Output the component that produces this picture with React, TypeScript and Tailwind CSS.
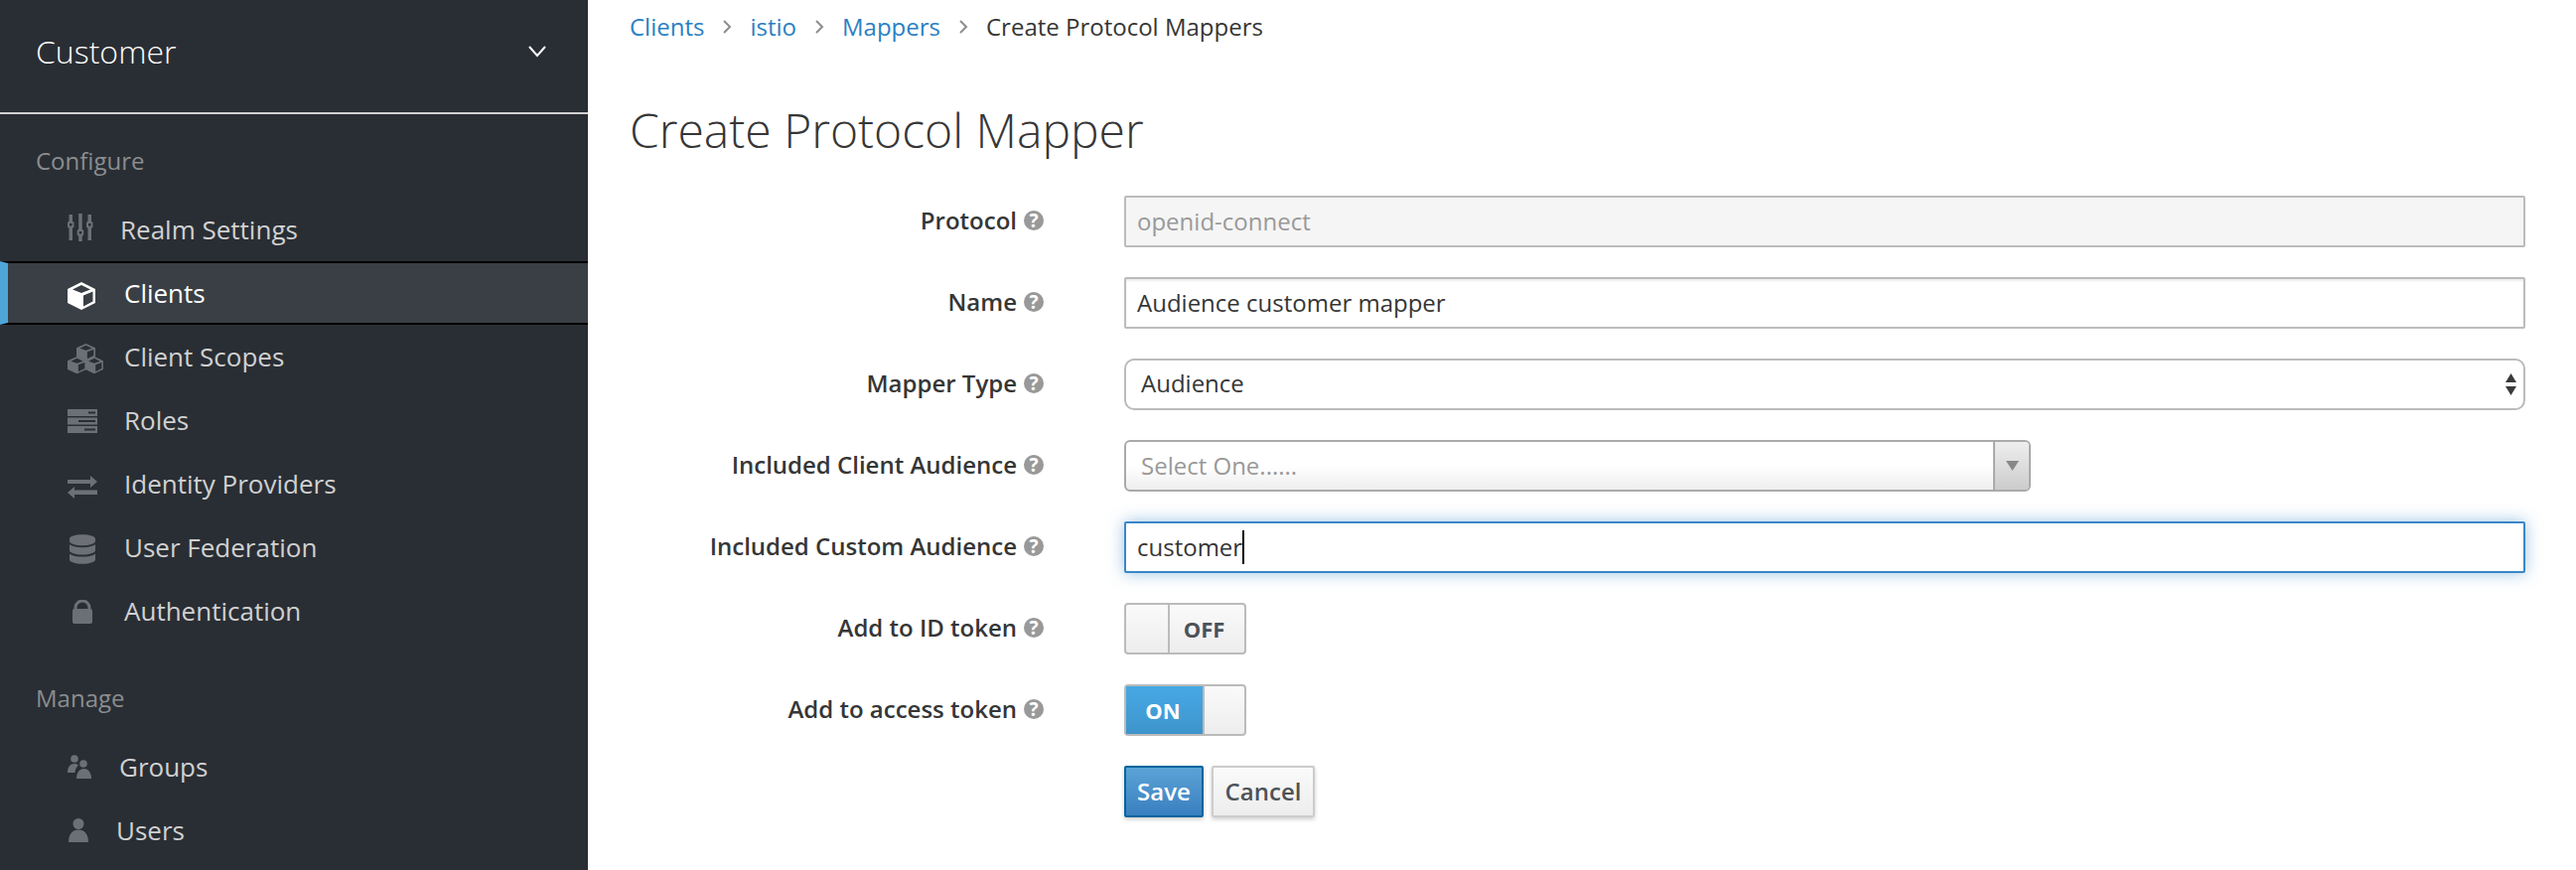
import { FaDatabase } from "react-icons/fa";
import type { ReactNode } from "react";

const CUBE = "M14 0l14 7v14l-14 7-14-7V7zM14 3L5 7.500l9 3.500 9-3.500zM16 13.500v11l9.500-5V9.500z";

const SlidersIcon = () => (
  <svg width="26" height="28" viewBox="0 0 26 28" fill="#6c7076" className="mt-[-4px]">
    <rect x="1.500" y="1" width="3.500" height="26" />
    <rect x="11.200" y="0" width="3.500" height="28" />
    <rect x="20.500" y="1" width="3.500" height="26" />
    <rect x="0" y="8" width="6.500" height="6.500" rx="1.500" stroke="#292e34" strokeWidth="0" />
    <rect x="9.700" y="16" width="6.500" height="6.500" rx="1.500" />
    <rect x="19" y="8" width="6.500" height="6.500" rx="1.500" />
    <rect x="2" y="10" width="2.500" height="2.500" fill="#292e34" />
    <rect x="11.700" y="18" width="2.500" height="2.500" fill="#292e34" />
    <rect x="21" y="10" width="2.500" height="2.500" fill="#292e34" />
  </svg>
);

const CubeIcon = () => (
  <svg width="28" height="28" viewBox="0 0 28 28" fill="#fff" className="mt-[6px]">
    <path fillRule="evenodd" d={CUBE} />
  </svg>
);

const CubesIcon = () => (
  <svg width="36" height="31" viewBox="0 0 36 31" fill="#6c7076" className="mt-[5px]">
    <path fillRule="evenodd" transform="translate(9 0) scale(0.68 0.62)" d={CUBE} />
    <path fillRule="evenodd" transform="translate(0 13) scale(0.68 0.62)" d={CUBE} />
    <path fillRule="evenodd" transform="translate(18 13) scale(0.64 0.62)" d={CUBE} />
  </svg>
);

const RolesIcon = () => (
  <svg width="30" height="24" viewBox="0 0 30 24" fill="#6c7076" className="mt-[2px]">
    <path fillRule="evenodd" d="M0 0h30v7H0zM21 2.500v2h7v-2z" />
    <path fillRule="evenodd" d="M0 8.500h30v7H0zM11 11v2h17v-2z" />
    <path fillRule="evenodd" d="M0 17h30v7H0zM17 19.500v2h11v-2z" />
  </svg>
);

const ExchangeIcon = () => (
  <svg width="30" height="23" viewBox="0 0 30 23" fill="#6c7076" className="mt-[6px]">
    <path d="M0 4h23V0l7 6-7 6V8H0z" />
    <path d="M30 14.500H7V11l-7 6 7 6v-4h23z" />
  </svg>
);

const LockIcon = () => (
  <svg width="20" height="24" viewBox="0 0 20 24" fill="#6c7076" className="ml-[5px] mt-[2px]">
    <path d="M3 10V8a7 7 0 0114 0v2" fill="none" stroke="#6c7076" strokeWidth="3" />
    <rect x="0" y="9" width="20" height="15" rx="2" />
  </svg>
);

const GroupsIcon = () => (
  <svg width="24" height="24" viewBox="0 0 24 24" fill="#6c7076">
    <circle cx="7" cy="4" r="3.800" />
    <path d="M0 18c0-6 3-9 7-9 1.500 0 3 .5 4 1.500-2 2-3.500 4-3.500 7.500z" />
    <circle cx="16" cy="9" r="3.800" />
    <path d="M9 24c0-6 3-10 7.500-10S24 18 24 24z" />
  </svg>
);

const UserIcon = () => (
  <svg width="20" height="24" viewBox="0 0 20 24" fill="#6c7076" className="ml-[1px]">
    <circle cx="10" cy="5.500" r="5.500" />
    <path d="M0 24c0-8 4-12.500 10-12.500S20 16 20 24z" />
  </svg>
);

const navConfigure: { label: string; icon: ReactNode; gap: string; active?: boolean }[] = [
  { label: "Realm Settings", icon: <SlidersIcon />, gap: "w-[53px]" },
  { label: "Clients", icon: <CubeIcon />, gap: "w-[57px]", active: true },
  { label: "Client Scopes", icon: <CubesIcon />, gap: "w-[57px]" },
  { label: "Roles", icon: <RolesIcon />, gap: "w-[57px]" },
  { label: "Identity Providers", icon: <ExchangeIcon />, gap: "w-[57px]" },
  { label: "User Federation", icon: <FaDatabase className="w-[26px] h-[30px] text-[#6c7076] ml-[2px] mt-[4px]" />, gap: "w-[57px]" },
  { label: "Authentication", icon: <LockIcon />, gap: "w-[57px]" },
];

const navManage = [
  { label: "Groups", icon: <GroupsIcon />, gap: "w-[52px]" },
  { label: "Users", icon: <UserIcon />, gap: "w-[49px]" },
];

const NavRow = ({ label, icon, gap, active }: { label: string; icon: ReactNode; gap: string; active?: boolean }) => (
  <div
    className={
      active
        ? "flex items-center h-[64px] pl-[60px] bg-[#393f44] border-y-2 border-black border-l-[8px] border-l-[#4ea5d8] text-white"
        : "flex items-center h-[64px] pl-[68px] text-[#d1d1d1]"
    }
  >
    <span className="w-0 flex items-center">
      <span className="shrink-0 flex">{icon}</span>
    </span>
    <span className={gap + " shrink-0"} />
    <span>{label}</span>
  </div>
);

const Help = () => (
  <span className="inline-flex items-center justify-center w-[20px] h-[20px] rounded-full bg-[#999] text-white text-[19px] font-bold leading-none">
    ?
  </span>
);

const Row = ({ label, children }: { label?: string; children: ReactNode }) => (
  <div className="flex h-[52px] mb-[30px]">
    <div className="w-[417px] shrink-0 flex items-center justify-end gap-[7px] font-semibold text-[#363636] pb-[2px]">
      {label && (
        <>
          <span>{label}</span>
          <Help />
        </>
      )}
    </div>
    <div className="w-[81px] shrink-0" />
    <div className="flex-1 min-w-0">{children}</div>
  </div>
);

const Chevron = () => (
  <svg width="10" height="16" viewBox="0 0 10 16" fill="none" stroke="#8b8d8f" strokeWidth="2" className="mx-[18px]">
    <path d="M2 2l6 6-6 6" />
  </svg>
);

export default function App() {
  return (
    <div className="flex h-[876px] w-[2594px] overflow-hidden bg-white text-[24px] leading-[34px] font-['Open_Sans',sans-serif] text-[#363636]">
      <aside className="w-[592px] shrink-0 bg-[#292e34] flex flex-col text-[26px] leading-[36px]">
        <div className="h-[115px] shrink-0 flex items-center justify-between pl-[36px] pr-[41px] pb-[9px] text-[32px] text-white font-light border-b-2 border-[#d1d1d1]">
          <span>Customer</span>
          <svg width="20" height="14" viewBox="0 0 20 14" fill="none" stroke="#fff" strokeWidth="2">
            <path d="M2 2l8 9 8-9" />
          </svg>
        </div>
        <div className="pl-[36px] h-[84px] shrink-0 flex items-center pt-[10px] text-[#8b8d8f] text-[24px]">Configure</div>
        {navConfigure.map((item) => (
          <NavRow key={item.label} {...item} />
        ))}
        <div className="pl-[36px] h-[93px] shrink-0 flex items-center pt-[19px] text-[#8b8d8f] text-[24px]">Manage</div>
        {navManage.map((item) => (
          <NavRow key={item.label} {...item} />
        ))}
      </aside>

      <main className="flex-1 min-w-0 pl-[42px] pr-[51px]">
        <nav className="flex items-center h-[54px]">
          <span className="text-[#2b7fc3]">Clients</span>
          <Chevron />
          <span className="text-[#2b7fc3]">istio</span>
          <Chevron />
          <span className="text-[#2b7fc3]">Mappers</span>
          <Chevron />
          <span>Create Protocol Mappers</span>
        </nav>
        <h1 className="font-light text-[48px] leading-[60px] mt-[47px] mb-[36px]">Create Protocol Mapper</h1>

        <Row label="Protocol">
          <div className="h-full flex items-center px-[11px] border-2 border-[#bbb] rounded-[2px] bg-[#f5f5f5] text-[#999]">openid-connect</div>
        </Row>
        <Row label="Name">
          <div className="h-full flex items-center px-[11px] border-2 border-[#bbb] rounded-[2px] shadow-[inset_0_2px_2px_rgba(3,3,3,0.08)]">Audience customer mapper</div>
        </Row>
        <Row label="Mapper Type">
          <div className="h-full flex items-center justify-between pl-[15px] pr-[7px] border-2 border-[#bbb] rounded-[10px]">
            <span className="pb-[2px]">Audience</span>
            <svg width="11" height="22" viewBox="0 0 11 22" fill="#3a3a3a">
              <path d="M5.500 0L11 9H0zM5.500 22L0 13h11z" />
            </svg>
          </div>
        </Row>
        <Row label="Included Client Audience">
          <div className="h-full w-[913px] flex border-2 border-[#aaa] rounded-[6px] bg-gradient-to-b from-white from-50% to-[#eee] overflow-hidden">
            <div className="flex-1 flex items-center pl-[15px] text-[#999]">Select One......</div>
            <div className="w-[36px] flex items-center justify-center border-l-2 border-[#aaa] bg-gradient-to-b from-[#eee] to-[#ccc]">
              <svg width="13" height="10" viewBox="0 0 13 10" fill="#888">
                <path d="M0 0h13L6.500 10z" />
              </svg>
            </div>
          </div>
        </Row>
        <Row label="Included Custom Audience">
          <div className="h-full flex items-center px-[11px] border-2 border-[#3a87c8] rounded-[2px] shadow-[0_0_16px_rgba(58,135,200,0.5)]">
            <span>customer</span>
            <span className="w-[2px] h-[34px] bg-black" />
          </div>
        </Row>
        <Row label="Add to ID token">
          <div className="h-full w-[123px] flex border-2 border-[#bbb] rounded-[4px] bg-gradient-to-b from-[#fafafa] to-[#ededed]">
            <div className="w-[44px] border-r-2 border-[#bbb]" />
            <div className="flex-1 flex items-center justify-center pr-[6px] font-bold text-[22px] text-[#4d5258]">OFF</div>
          </div>
        </Row>
        <Row label="Add to access token">
          <div className="h-full w-[123px] flex border-2 border-[#bbb] rounded-[4px] bg-gradient-to-b from-[#fafafa] to-[#ededed]">
            <div className="w-[77px] flex items-center justify-center pr-[3px] font-bold text-[22px] text-white bg-gradient-to-b from-[#46a9e4] to-[#3f94cc]">ON</div>
            <div className="flex-1 border-l-2 border-[#bbb]" />
          </div>
        </Row>
        <Row>
          <div className="h-full flex gap-[8px]">
            <div className="w-[80px] flex items-center justify-center font-semibold text-white border-2 border-[#00659c] rounded-[2px] bg-gradient-to-b from-[#5ba3d6] to-[#3a7fc0] shadow-[0_2px_4px_rgba(0,0,0,0.2)]">Save</div>
            <div className="w-[104px] flex items-center justify-center font-semibold text-[#4d5258] border-2 border-[#ccc] rounded-[2px] bg-gradient-to-b from-[#fafafa] to-[#ededed] shadow-[0_2px_4px_rgba(0,0,0,0.2)]">Cancel</div>
          </div>
        </Row>
      </main>
    </div>
  );
}
